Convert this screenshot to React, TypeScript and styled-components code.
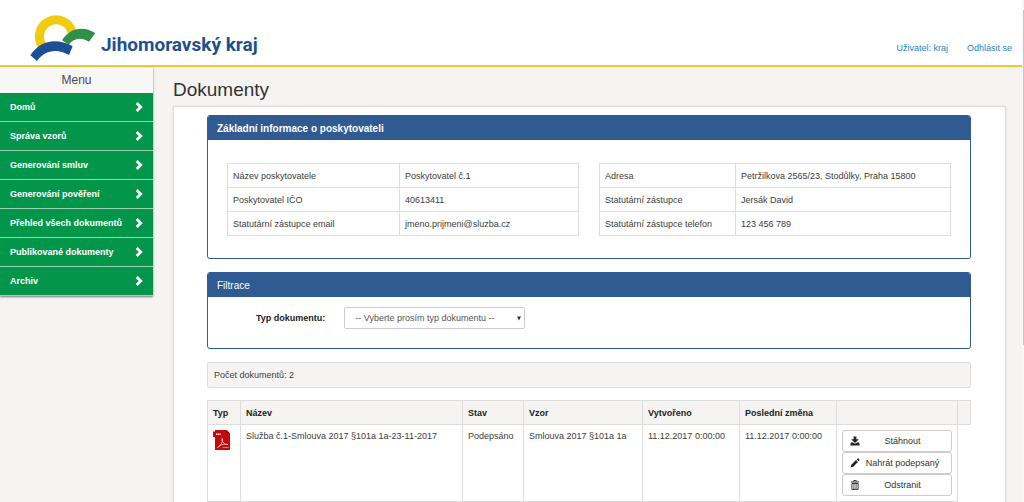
import React from "react";
import styled, { createGlobalStyle } from "styled-components";

const Global = createGlobalStyle`
  *, *::before, *::after { box-sizing: border-box; }
  body {
    margin: 0;
    background: #f5f4f3;
    color: #3c3c3c;
    font: 9px/12px "Liberation Sans", Arial, sans-serif;
  }
  #root { height: 100vh; overflow: hidden; }
`;

const Shell = styled.div`
  display: grid;
  grid-template-columns: minmax(0, 1fr) 2px;
  height: 100vh;
`;

const Page = styled.div`
  min-width: 0;
  overflow: hidden;
`;

const Track = styled.div`
  padding: 10px 0 0 1px;
  background: #f8f8f8;
`;

const Thumb = styled.div`
  height: 68%;
  background: #c8c8c8;
`;

const Header = styled.header`
  display: flex;
  justify-content: space-between;
  align-items: flex-end;
  height: 67px;
  padding: 0 10px 0 30px;
  background: #fff;
  border-bottom: 2px solid #f0c92e;
`;

const Brand = styled.a`
  display: flex;
  align-items: flex-end;
  gap: 5px;
  padding-bottom: 3px;
  color: #1d4f8f;
  text-decoration: none;
`;

const BrandName = styled.span`
  padding-bottom: 5px;
  font: bold 19px/24px Roboto, "Liberation Sans", sans-serif;
  white-space: nowrap;
`;

const UserLinks = styled.nav`
  display: flex;
  gap: 19px;
  padding-bottom: 11px;
`;

const UserLink = styled.a`
  color: #2a82c0;
  text-decoration: none;
`;

const Columns = styled.div`
  display: grid;
  grid-template-columns: 153px minmax(0, 1fr);
  align-items: start;
`;

const Sidebar = styled.nav`
  background: #f8f7f6;
  box-shadow: 0 1px 2px rgba(0, 0, 0, 0.5);
`;

const MenuTitle = styled.h2`
  margin: 0;
  padding: 5px 0;
  color: #4a4a4a;
  font-size: 12px;
  line-height: 16px;
  font-weight: normal;
  text-align: center;
`;

const MenuList = styled.ul`
  margin: 0;
  padding: 0;
  list-style: none;
`;

const MenuLink = styled.a`
  display: flex;
  justify-content: space-between;
  align-items: center;
  height: 29px;
  padding: 0 10px;
  background: #03964b;
  border-bottom: 1px solid #9bd3b5;
  color: #fff;
  font-weight: bold;
  text-decoration: none;
`;

const Main = styled.main`
  padding: 11px 16px 0 20px;
`;

const Title = styled.h1`
  margin: 0 0 4px;
  color: #333;
  font-size: 19px;
  line-height: 24px;
  font-weight: normal;
`;

const Card = styled.section`
  padding: 8px 34px 40px 33px;
  background: #fff;
  border: 1px solid #dfdedd;
  border-radius: 2px;
  box-shadow: 0 0 2px rgba(0, 0, 0, 0.15);
`;

const Panel = styled.section`
  margin-bottom: 13px;
  border: 1px solid #2f5a92;
  border-radius: 3px;
  overflow: hidden;
`;

const PanelTitle = styled.h3<{ $strong?: boolean }>`
  margin: 0;
  padding: 6px 9px 5px;
  background: #2f5a92;
  color: #fff;
  font-size: 10px;
  line-height: 13px;
  font-weight: ${(p) => (p.$strong ? "bold" : "normal")};
`;

const InfoGrid = styled.div`
  display: grid;
  grid-template-columns: 1fr 1fr;
  gap: 20px;
  padding: 23px 19px 22px;
`;

const InfoTable = styled.table<{ $label: string }>`
  width: 100%;
  border-collapse: collapse;
  table-layout: fixed;

  th, td {
    height: 24px;
    padding: 0 5px;
    border: 1px solid #ddd;
    font-weight: normal;
    text-align: left;
  }
  th { width: ${(p) => p.$label}; }
`;

const FilterForm = styled.form`
  display: flex;
  align-items: center;
  gap: 19px;
  padding: 10px 0 19px 48px;
`;

const FilterLabel = styled.label`
  color: #222;
  font-weight: bold;
`;

const SelectWrap = styled.div`
  display: grid;
  grid-template-columns: 181px;
  align-items: center;
`;

const Select = styled.select`
  grid-area: 1 / 1;
  appearance: none;
  height: 22px;
  padding: 0 20px 0 10px;
  background: #fff;
  border: 1px solid #ccc;
  border-radius: 2px;
  color: #555;
  font: inherit;
`;

const Caret = styled.svg`
  grid-area: 1 / 1;
  justify-self: end;
  margin-right: 4px;
  pointer-events: none;
`;

const Count = styled.p`
  margin: 0 0 12px;
  padding: 6px;
  background: #f5f4f3;
  border: 1px solid #dedddc;
  border-radius: 2px;
`;

const DocTable = styled.table`
  width: 100%;
  border-collapse: collapse;
  table-layout: fixed;

  th, td {
    padding: 5px;
    border: 1px solid #ddd;
    text-align: left;
    vertical-align: top;
    white-space: nowrap;
  }
  th {
    height: 24px;
    padding-top: 6px;
    background: #f5f4f3;
    color: #222;
  }
  td { height: 77px; }
  td:last-child { border: 0; }
`;

const Col = styled.col<{ $width?: string }>`
  width: ${(p) => p.$width ?? "auto"};
`;

const Actions = styled.div`
  display: flex;
  flex-direction: column;
`;

const ActionButton = styled.button`
  display: grid;
  grid-template-columns: 10px 1fr;
  align-items: center;
  gap: 2px;
  height: 22px;
  padding: 0 8px 0 7px;
  background: #fff;
  border: 1px solid #ccc;
  border-radius: 3px;
  color: #333;
  font: inherit;
`;

const Logo = () => (
  <svg width="66" height="48" viewBox="90 42 198 144" aria-hidden="true">
    <path d="M128 139A50 50 0 1 1 217 98" fill="none" stroke="#f0cb12" strokeWidth="27" />
    <path d="M186 121C210 83 250 77 286 99L267 125C244 110 220 114 206 134Z" fill="#2f8f46" />
    <path d="M91 166C120 121 170 112 218 139L207 165C172 144 133 150 111 183Z" fill="#1d4f94" />
  </svg>
);

const Chevron = () => (
  <svg width="8" height="10" viewBox="0 0 8 10" aria-hidden="true">
    <path d="M1.7 1L5.7 5L1.7 9" fill="none" stroke="#fff" strokeWidth="2.8" />
  </svg>
);

const PdfIcon = () => (
  <svg width="18" height="20" viewBox="0 0 18 20" role="img" aria-label="PDF">
    <path d="M2 0H13.5L17 3.5V20H2V7H0V1.5H2Z" fill="#c4080c" />
    <path d="M13.5 0V3.5H17Z" fill="#8e0508" />
    <path d="M3 4.2H8" stroke="#fff" strokeWidth="1.4" strokeDasharray="1.2 .5" />
    <path d="M4.5 17.5C8 15 10.3 11.5 9.2 8.5C8.2 11 11 15.3 15 14.6C11 13.4 7.5 14.8 4.5 17.5Z" fill="none" stroke="#f7dada" strokeWidth=".8" />
    <path d="M9.5 17.5H15.5" stroke="#e07a7a" strokeWidth="1" />
  </svg>
);

const DownloadIcon = () => (
  <svg width="10" height="10" viewBox="0 0 10 10" aria-hidden="true">
    <path d="M3.6 0.5H6.4V3.2H8.8L5 6.9L1.2 3.2H3.6ZM1 6.4H3L4.3 7.6H5.7L7 6.4H9V7.3H9.5V9.6H.5V7.3H1Z" fill="#222" />
  </svg>
);

const PencilIcon = () => (
  <svg width="10" height="10" viewBox="0 0 10 10" aria-hidden="true">
    <path d="M0.5 9.5L1.3 6.8L6 2.1L7.9 4L3.2 8.7ZM6.7 1.4L7.6 .5Q8 .2 8.5 .6L9.4 1.5Q9.8 2 9.4 2.4L8.6 3.3Z" fill="#222" />
  </svg>
);

const TrashIcon = () => (
  <svg width="10" height="10" viewBox="0 0 10 10" aria-hidden="true">
    <path d="M1 2H9M3.7 1.7V.6H6.3V1.7M1.9 3.5H8.1V9.4H1.9Z" fill="none" stroke="#333" />
    <path d="M3.7 4V9M5 4V9M6.3 4V9" stroke="#555" strokeWidth=".7" />
  </svg>
);

const menu = [
  "Domů",
  "Správa vzorů",
  "Generování smluv",
  "Generování pověření",
  "Přehled všech dokumentů",
  "Publikované dokumenty",
  "Archiv",
];

const provider = [
  ["Název poskytovatele", "Poskytovatel č.1"],
  ["Poskytovatel IČO", "40613411"],
  ["Statutární zástupce email", "jmeno.prijmeni@sluzba.cz"],
];

const contact = [
  ["Adresa", "Petržilkova 2565/23, Stodůlky, Praha 15800"],
  ["Statutární zástupce", "Jersák David"],
  ["Statutární zástupce telefon", "123 456 789"],
];

const Info = ({ rows, label }: { rows: string[][]; label: string }) => (
  <InfoTable $label={label}>
    <tbody>
      {rows.map(([name, value]) => (
        <tr key={name}>
          <th scope="row">{name}</th>
          <td>{value}</td>
        </tr>
      ))}
    </tbody>
  </InfoTable>
);

export default function App() {
  return (
    <>
      <Global />
      <Shell>
        <Page>
          <Header>
            <Brand href="#">
              <Logo />
              <BrandName>Jihomoravský kraj</BrandName>
            </Brand>
            <UserLinks>
              <UserLink href="#">Uživatel: kraj</UserLink>
              <UserLink href="#">Odhlásit se</UserLink>
            </UserLinks>
          </Header>
          <Columns>
            <Sidebar>
              <MenuTitle>Menu</MenuTitle>
              <MenuList>
                {menu.map((item) => (
                  <li key={item}>
                    <MenuLink href="#">
                      {item}
                      <Chevron />
                    </MenuLink>
                  </li>
                ))}
              </MenuList>
            </Sidebar>
            <Main>
              <Title>Dokumenty</Title>
              <Card>
                <Panel>
                  <PanelTitle $strong>Základní informace o poskytovateli</PanelTitle>
                  <InfoGrid>
                    <Info rows={provider} label="49%" />
                    <Info rows={contact} label="136px" />
                  </InfoGrid>
                </Panel>
                <Panel>
                  <PanelTitle>Filtrace</PanelTitle>
                  <FilterForm>
                    <FilterLabel htmlFor="type">Typ dokumentu:</FilterLabel>
                    <SelectWrap>
                      <Select id="type">
                        <option>-- Vyberte prosím typ dokumentu --</option>
                      </Select>
                      <Caret width="4" height="5" viewBox="0 0 4 5" aria-hidden="true">
                        <path d="M0 .5H4L2 4.5Z" fill="#333" />
                      </Caret>
                    </SelectWrap>
                  </FilterForm>
                </Panel>
                <Count>Počet dokumentů: 2</Count>
                <DocTable>
                  <colgroup>
                    <Col $width="33px" />
                    <Col />
                    <Col $width="61px" />
                    <Col $width="119px" />
                    <Col $width="97px" />
                    <Col $width="97px" />
                    <Col $width="121px" />
                    <Col $width="13px" />
                  </colgroup>
                  <thead>
                    <tr>
                      <th>Typ</th>
                      <th>Název</th>
                      <th>Stav</th>
                      <th>Vzor</th>
                      <th>Vytvořeno</th>
                      <th>Poslední změna</th>
                      <th />
                      <th />
                    </tr>
                  </thead>
                  <tbody>
                    <tr>
                      <td><PdfIcon /></td>
                      <td>Služba č.1-Smlouva 2017 §101a 1a-23-11-2017</td>
                      <td>Podepsáno</td>
                      <td>Smlouva 2017 §101a 1a</td>
                      <td>11.12.2017 0:00:00</td>
                      <td>11.12.2017 0:00:00</td>
                      <td>
                        <Actions>
                          <ActionButton type="button"><DownloadIcon />Stáhnout</ActionButton>
                          <ActionButton type="button"><PencilIcon />Nahrát podepsaný</ActionButton>
                          <ActionButton type="button"><TrashIcon />Odstranit</ActionButton>
                        </Actions>
                      </td>
                      <td />
                    </tr>
                  </tbody>
                </DocTable>
              </Card>
            </Main>
          </Columns>
        </Page>
        <Track><Thumb /></Track>
      </Shell>
    </>
  );
}
